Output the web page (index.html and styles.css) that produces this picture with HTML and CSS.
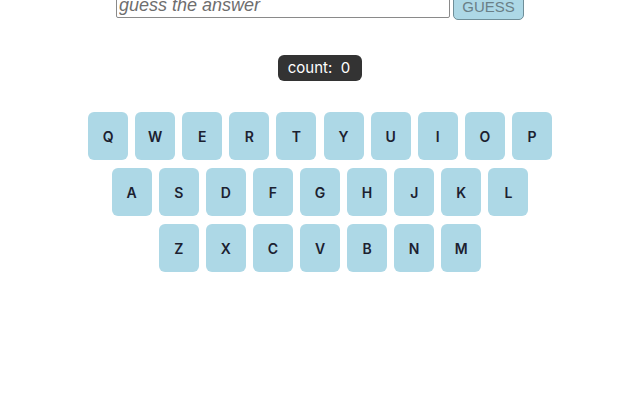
FILE: index.html
```
<!DOCTYPE html>
<html lang="en">
<head>
    <meta charset="UTF-8">
    <title>Guess</title>
    <link rel="stylesheet" href="styles.css">
</head>
<body>
    <div class="guess-row">
        <input type="text" class="guess-input" placeholder="guess the answer">
        <button class="guess-btn">GUESS</button>
    </div>

    <div class="count-wrap">
        <div class="count">count:&nbsp; 0</div>
    </div>

    <div class="keyboard">
        <div class="key-row">
            <div class="key">Q</div><div class="key">W</div><div class="key">E</div><div class="key">R</div><div class="key">T</div><div class="key">Y</div><div class="key">U</div><div class="key">I</div><div class="key">O</div><div class="key">P</div>
        </div>
        <div class="key-row">
            <div class="key">A</div><div class="key">S</div><div class="key">D</div><div class="key">F</div><div class="key">G</div><div class="key">H</div><div class="key">J</div><div class="key">K</div><div class="key">L</div>
        </div>
        <div class="key-row">
            <div class="key">Z</div><div class="key">X</div><div class="key">C</div><div class="key">V</div><div class="key">B</div><div class="key">N</div><div class="key">M</div>
        </div>
    </div>
</body>
</html>
```

FILE: styles.css
```
body { margin: 0; font-family: Inter, "Liberation Sans", sans-serif; background: #fff; }
.guess-row { display: flex; justify-content: center; gap: 3px; margin-top: -8px; }
.guess-input { width: 334px; height: 26px; box-sizing: border-box; border: 1px solid #8a8a8a; border-radius: 2px; padding: 0 2px; font-family: "Liberation Sans", sans-serif; font-size: 18px; font-style: italic; }
.guess-input::placeholder { color: #6e6e6e; }
.guess-btn { width: 71px; height: 28px; background: #add8e6; border: 1px solid #6f8e98; border-radius: 5px; color: #6a7f86; font-family: "Liberation Sans", sans-serif; font-size: 15px; padding: 0; }
.count-wrap { display: flex; justify-content: center; margin-top: 35px; }
.count { background: #333; color: #fff; width: 84px; height: 26px; box-sizing: border-box; border-radius: 6px; font-size: 15px; line-height: 26px; text-align: center; padding-right: 2px; }
.keyboard { display: flex; flex-direction: column; align-items: center; gap: 8px; margin-top: 31px; }
.key-row { display: flex; gap: 7.1px; }
.key { width: 40px; height: 48px; background: #add8e6; border-radius: 6px; display: flex; align-items: center; justify-content: center; font-size: 14px; font-weight: 600; color: #1c2130; }
```
